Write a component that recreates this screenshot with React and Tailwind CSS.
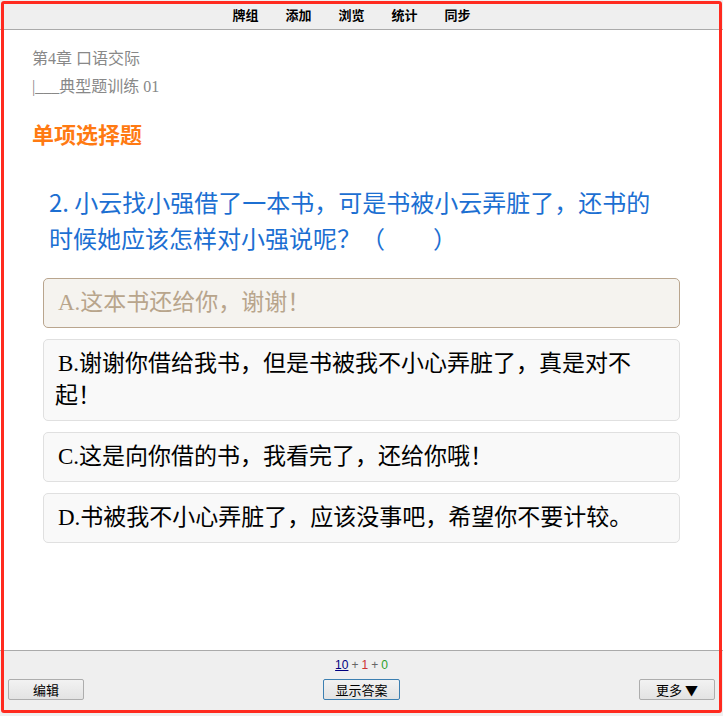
export default function App() {
  const serif = { fontFamily: '"Liberation Serif", "Noto Sans CJK SC", serif' };
  const opts = [
    { t: 'A.这本书还给你，谢谢！', sel: true },
    { t: 'B.谢谢你借给我书，但是书被我不小心弄脏了，真是对不起！' },
    { t: 'C.这是向你借的书，我看完了，还给你哦！' },
    { t: 'D.书被我不小心弄脏了，应该没事吧，希望你不要计较。' },
  ];
  return (
    <div className="relative w-[723px] h-[716px] bg-white flex flex-col overflow-hidden font-['Noto_Sans_CJK_SC',sans-serif]">
      <div className="h-[30px] shrink-0 bg-[#efefef] border-b border-[#aaaaaa] flex items-center justify-center gap-[27px] pr-[20px] text-[13px] font-bold text-black">
        <span>牌组</span>
        <span>添加</span>
        <span>浏览</span>
        <span>统计</span>
        <span>同步</span>
      </div>
      <div className="flex-1 flex flex-col">
        <div className="pl-[32px] pt-[15px] text-[16px] text-[#888888] leading-[28px]" style={serif}>
          <div>第4章 口语交际</div>
          <div>|___典型题训练 01</div>
        </div>
        <div className="pl-[32px] mt-[18px] text-[22px] font-bold text-[#ff7a12] leading-[28px]">单项选择题</div>
        <div className="pl-[49px] pr-[50px] mt-[37px] text-[24px] leading-[36px] text-[#1c6fd2]">
          2. 小云找小强借了一本书，可是书被小云弄脏了，还书的时候她应该怎样对小强说呢？（　　）
        </div>
        <div className="mx-[43px] mt-[22px] flex flex-col gap-[11px]">
          {opts.map((o, i) => (
            <div
              key={i}
              className={
                'rounded-[5px] border px-[11px] py-[8px] text-[23px] leading-[32px] ' +
                (o.sel
                  ? 'bg-[#f5f3ef] border-[#b9a58e] text-[#b8a58c]'
                  : 'bg-[#f9f9f9] border-[#e0e0e0] text-black')
              }
              style={serif}
            >
              <span className="inline-block w-[3px]" />
              {o.t}
            </div>
          ))}
        </div>
      </div>
      <div className="h-[66px] shrink-0 bg-[#efefef] border-t border-[#aaaaaa] flex flex-col">
        <div className="h-[28px] flex items-center justify-center text-[12px] font-['Liberation_Sans',sans-serif]">
          <span className="text-[#000080] underline">10</span>
          <span className="text-[#666] mx-[3px]">+</span>
          <span className="text-[#c33]">1</span>
          <span className="text-[#666] mx-[3px]">+</span>
          <span className="text-[#2aa02a]">0</span>
        </div>
        <div className="flex justify-between items-center px-[8px]">
          <button className="w-[76px] h-[21px] border border-[#adadad] rounded-[2px] bg-gradient-to-b from-[#f2f2f2] to-[#e3e3e3] text-[13px] text-black leading-none">编辑</button>
          <button className="w-[77px] h-[21px] border border-[#3c7fb1] rounded-[2px] bg-gradient-to-b from-[#f2f2f2] to-[#e3e3e3] text-[13px] text-black leading-none">显示答案</button>
          <button className="w-[76px] h-[21px] border border-[#adadad] rounded-[2px] bg-gradient-to-b from-[#f2f2f2] to-[#e3e3e3] text-[13px] text-black leading-none">更多 ▼</button>
        </div>
      </div>
      <div className="pointer-events-none absolute left-[1px] top-[1px] right-[1px] bottom-[3px] border-[3px] border-[#ff2a1f] rounded-[3px]" />
    </div>
  );
}
